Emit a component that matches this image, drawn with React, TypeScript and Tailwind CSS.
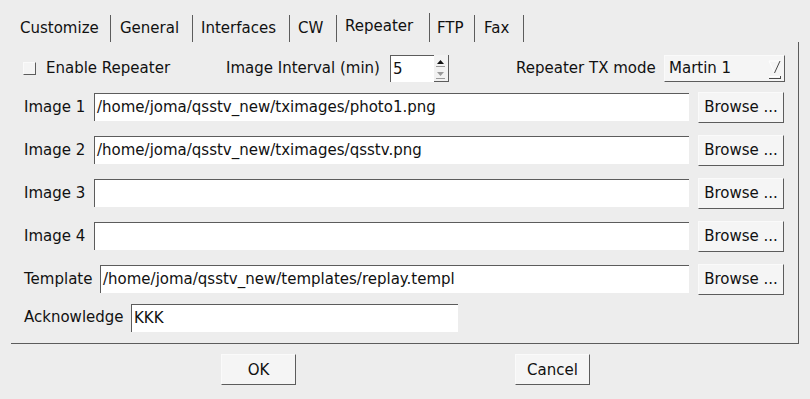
import React from 'react';

const dark = 'border-[#5c5c5c]';

const tabs = [
  { name: 'Customize', w: 'w-[101px]', pl: 'pl-[10px]' },
  { name: 'General', w: 'w-[82px]', pl: 'pl-[9px]' },
  { name: 'Interfaces', w: 'w-[97px]', pl: 'pl-[8px]' },
  { name: 'CW', w: 'w-[47px]', pl: 'pl-[8px]' },
  { name: 'Repeater', w: 'w-[93px]', pl: 'pl-[8px]', active: true },
  { name: 'FTP', w: 'w-[45px]', pl: 'pl-[7px]' },
  { name: 'Fax', w: 'w-[49px]', pl: 'pl-[9px]' },
];

const imageRows = [
  { label: 'Image 1', value: '/home/joma/qsstv_new/tximages/photo1.png' },
  { label: 'Image 2', value: '/home/joma/qsstv_new/tximages/qsstv.png' },
  { label: 'Image 3', value: '' },
  { label: 'Image 4', value: '' },
];

// raised Motif-ish push button
const PushButton = ({ label, className = '' }: { label: string; className?: string }) => (
  <button
    className={`h-[31px] bg-[#f5f5f5] border-r border-b ${dark} border-t border-l border-t-[#fafafa] border-l-[#fafafa] text-[15px] text-[#111] pt-[1px] ${className}`}
  >
    {label}
  </button>
);

const TextField = ({ value, className = '' }: { value: string; className?: string }) => (
  <div className={`h-[28px] bg-white border-t border-l ${dark} flex items-center pl-[2px] text-[15px] text-[#111] whitespace-nowrap overflow-hidden ${className}`}>
    {value}
  </div>
);

const FileRow = ({ label, value, labelW }: { label: string; value: string; labelW: string }) => (
  <div className="flex items-center h-[30px] pl-[13px]">
    <span className={`${labelW} shrink-0`}>{label}</span>
    <TextField value={value} className="flex-1" />
    <PushButton label="Browse ..." className="w-[86px] ml-[9px] shrink-0" />
  </div>
);

const App = () => {
  return (
    <div
      className="w-[810px] h-[399px] bg-[#ededed] text-[15px] text-[#111] overflow-hidden"
      style={{ fontFamily: '"DejaVu Sans", "Liberation Sans", sans-serif' }}
    >
      {/* Tab bar */}
      <div className="h-[42px] flex items-end pl-[10px]">
        {tabs.map((t) => (
          <div
            key={t.name}
            className={`${t.w} ${t.pl} ${t.active ? 'h-[29px] pb-[3px]' : 'h-[27px] pb-[1px]'} flex items-center border-r border-[#5c5c5c] shrink-0 whitespace-nowrap`}
          >
            {t.name}
          </div>
        ))}
      </div>

      {/* Tab page */}
      <div className={`ml-[11px] w-[788px] border-r border-b ${dark} pt-[13px] pb-[12px] pr-[14px]`}>
        {/* Row 1 */}
        <div className="flex items-center h-[27px] pl-[12px]">
          <div className="w-[203px] flex items-center shrink-0">
            <div className={`w-[13px] h-[13px] bg-[#f4f4f4] border-r border-b ${dark} border-t border-l border-t-[#fafafa] border-l-[#fafafa]`} />
            <span className="ml-[10px] whitespace-nowrap">Enable Repeater</span>
          </div>
          <div className="w-[290px] flex items-center shrink-0">
            <span className="whitespace-nowrap">Image Interval (min)</span>
            <div className="ml-[10px] w-[59px] h-[27px] flex">
              <div className={`flex-1 bg-white border-t border-l ${dark} flex items-center pl-[2px]`}>5</div>
              <div className={`w-[15px] bg-[#f2f2f2] border-r border-b ${dark} flex flex-col items-center justify-center gap-[3px]`}>
                <svg width="9" height="9" viewBox="0 0 9 9">
                  <path d="M1 6 L4.5 2 L8 6 Z" fill="#111" />
                  <line x1="0" y1="8.5" x2="9" y2="8.5" stroke="#9a9a9a" />
                </svg>
                <svg width="9" height="9" viewBox="0 0 9 9">
                  <path d="M1 2 L4.5 6 L8 2 Z" fill="#9a9a9a" />
                  <line x1="0" y1="8.5" x2="9" y2="8.5" stroke="#9a9a9a" />
                </svg>
              </div>
            </div>
          </div>
          <span className="whitespace-nowrap">Repeater TX mode</span>
          <div className={`ml-auto -mr-[1px] w-[121px] h-[27px] bg-[#f5f5f5] border-r border-b ${dark} border-t border-l border-t-[#fafafa] border-l-[#fafafa] flex items-center pl-[4px] relative`}>
            Martin 1
            <svg className="absolute right-[3px] top-[4px]" width="13" height="19" viewBox="0 0 13 19">
              <path d="M1 1 L12 1" stroke="#ffffff" />
              <path d="M1 1 L6.5 13" stroke="#ffffff" />
              <path d="M12 1 L6.5 13" stroke="#4a4a4a" />
              <path d="M1 16.5 L12 16.5" stroke="#ffffff" />
              <path d="M1 18.5 L12.5 18.5 M12.5 16 L12.5 19" stroke="#4a4a4a" />
            </svg>
          </div>
        </div>

        {/* Image rows */}
        <div className="mt-[10px] flex flex-col gap-[13px]">
          {imageRows.map((r) => (
            <FileRow key={r.label} label={r.label} value={r.value} labelW="w-[70px]" />
          ))}
          <FileRow label="Template" value="/home/joma/qsstv_new/templates/replay.templ" labelW="w-[76px]" />
        </div>

        {/* Acknowledge */}
        <div className="mt-[10px] flex items-center h-[27px] pl-[13px]">
          <span className="w-[107px] shrink-0">Acknowledge</span>
          <TextField value="KKK" className="w-[327px] h-[27px]" />
        </div>
      </div>

      {/* Dialog buttons */}
      <div className="flex mt-[10px] pl-[221px]">
        <PushButton label="OK" className="w-[75px]" />
        <PushButton label="Cancel" className="w-[75px] ml-[219px]" />
      </div>
    </div>
  );
};

export default App;
